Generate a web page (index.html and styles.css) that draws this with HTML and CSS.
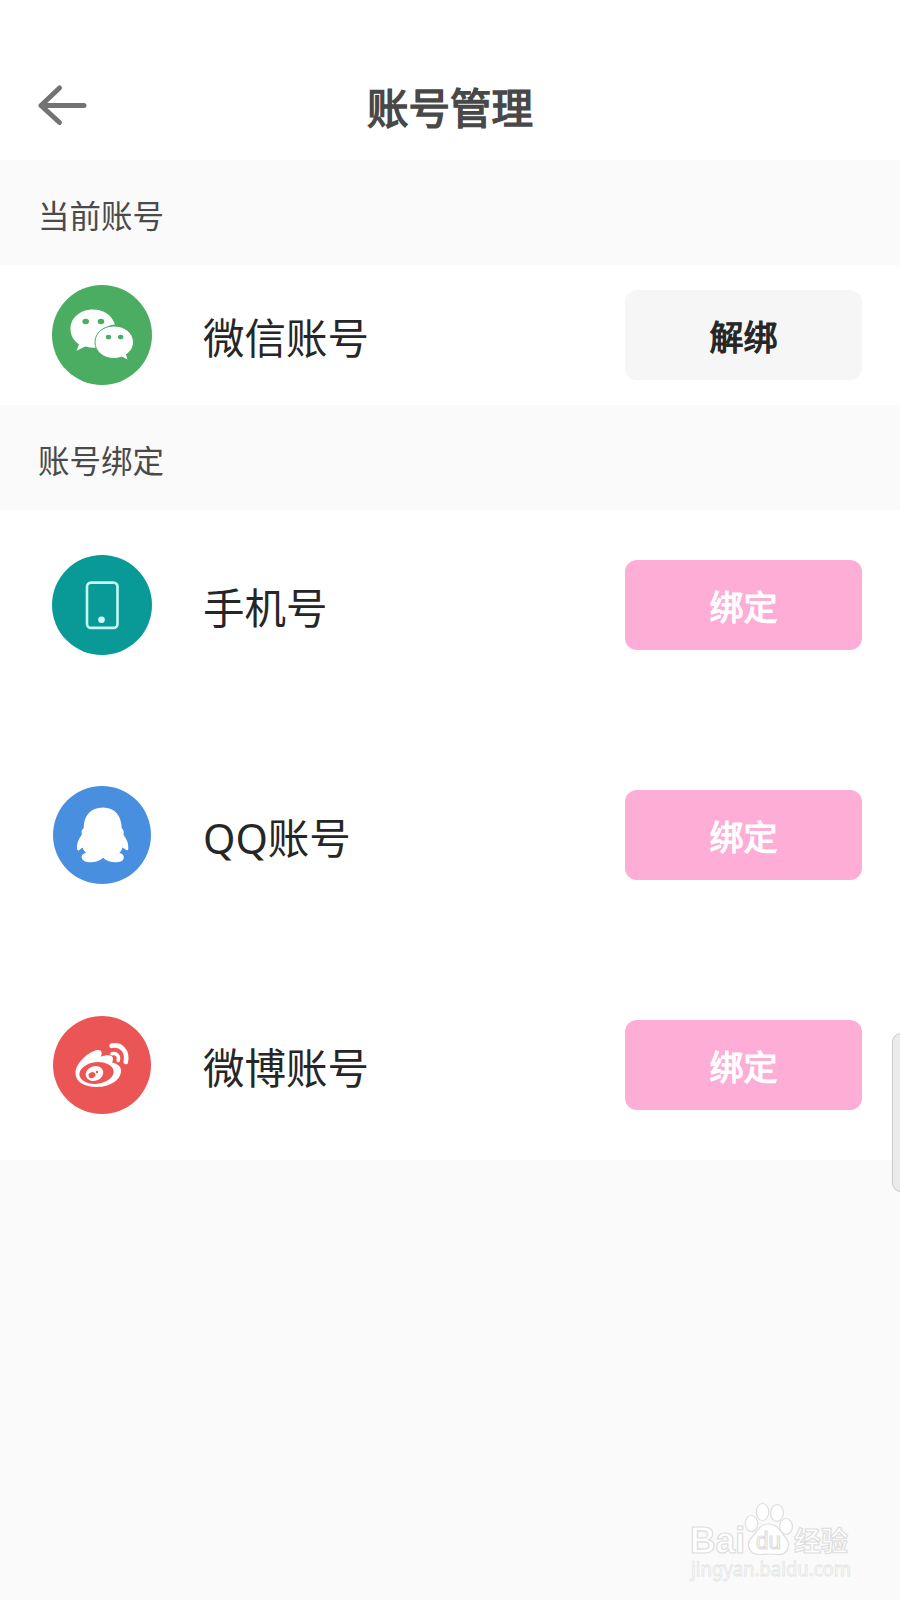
FILE: index.html
```html
<!DOCTYPE html>
<html lang="zh-CN">
<head>
<meta charset="utf-8">
<title>账号管理</title>
<link rel="stylesheet" href="styles.css">
</head>
<body>
<main class="screen">
  <header class="topbar">
    <svg class="back" width="52" height="44" viewBox="0 0 52 44"><path d="M23.500 5 5 22.500 23.500 39.500M5 22.500H48" /></svg>
    <h1 class="title">账号管理</h1>
  </header>

  <h2 class="caption">当前账号</h2>
  <section class="group current">
    <div class="row">
      <svg class="icon" viewBox="0 0 100 100">
        <circle cx="50" cy="50" r="50" fill="#4aad62"/>
        <path d="M41 24.500C28 24.500 18.500 33 18.500 44c0 6.800 3.500 12 8.500 15.500l-2.500 6.300 8.800-4.300c3.500 1 7 1.500 10.700 1.200C46 49 53 39.500 63 39.500 60 30 51.500 24.500 41 24.500z" fill="#fff"/>
        <path d="M62 41C51 41 43 48 43 57.200S51 73.500 62 73.500c3 0 5.600-.6 8-1.500l6.200 3.500-1.700-6c4.300-3 7-7.300 7-12.300C81.500 48 73 41 62 41z" fill="#fff" stroke="#4aad62" stroke-width="1"/>
        <g fill="#4aad62"><ellipse cx="33.700" cy="36.500" rx="3.300" ry="2.800"/><ellipse cx="49" cy="36.500" rx="3.300" ry="2.800"/><ellipse cx="56.500" cy="52" rx="2.700" ry="2.300"/><ellipse cx="68.700" cy="52" rx="2.700" ry="2.300"/></g>
      </svg>
      <span class="name">微信账号</span>
      <button class="action plain">解绑</button>
    </div>
  </section>

  <h2 class="caption">账号绑定</h2>
  <section class="group">
    <div class="row">
      <svg class="icon" viewBox="0 0 100 100">
        <circle cx="50" cy="50" r="50" fill="#099a98"/>
        <rect x="35" y="27.600" width="30.500" height="45.300" rx="4" fill="none" stroke="#c4f7f4" stroke-width="2.600"/>
        <circle cx="49.500" cy="64.800" r="3.300" fill="#d8fffd"/>
      </svg>
      <span class="name">手机号</span>
      <button class="action">绑定</button>
    </div>
    <div class="row">
      <svg class="icon" viewBox="0 0 100 100">
        <circle cx="50" cy="50" r="49" fill="#498fe0"/>
        <path d="M51 22.500C38.500 22.500 31.500 31 31.800 43c-1 1-2.300 2.400-2.300 4l.4 2.500C26.500 54 24.500 59 25 63.500c.3 2.300 1.700 2.500 3.200.7l2.300-1.700c.8 2.500 2 3.800 3.700 5.300-2.800 1-5 2.300-4.500 4.700 1 6.500 15.500 6.300 21.300.3 6 6 20.500 6.200 20.800-.3.2-2.600-1.800-3.800-4.500-4.700 1.500-1.500 2.800-3.100 3.300-5.300l2.500 1.700c1.800 1.800 3.100 1.400 3.200-.7.3-5-1.500-9.500-5-14 .6-1 .6-2.700 0-4.300l-1.600-2.200C69.500 31 63 22.500 51 22.500z" fill="#fff"/>
      </svg>
      <span class="name">QQ账号</span>
      <button class="action">绑定</button>
    </div>
    <div class="row">
      <svg class="icon" viewBox="0 0 100 100">
        <circle cx="50" cy="50" r="49" fill="#ec5555"/>
        <path d="M44 35.300c5-1.500 7 1.500 4.800 6.400 5.500-2.200 12-2.300 12.200 1.800.1 1.800-.6 3-.8 4 5.300 1.200 8.900 4 8.800 8.300C69 65 58 72 45 72S23.300 66.500 23.500 58C23.700 49 34 38.500 44 35.300z" fill="#fff"/>
        <ellipse cx="44.500" cy="58" rx="17.200" ry="10.800" transform="rotate(-7 44.500 58)" fill="#ec5555"/>
        <ellipse cx="42.500" cy="58.500" rx="9" ry="7.300" transform="rotate(-20 42.500 58.500)" fill="#fff"/>
        <ellipse cx="40" cy="60.200" rx="3.500" ry="2.900" transform="rotate(-25 40 60.200)" fill="#ec5555"/>
        <circle cx="45" cy="57" r="1.200" fill="#ec5555"/>
        <g fill="none" stroke="#fff" stroke-linecap="round"><path d="M59.500 30.800C69 28.500 76 36 73.800 47" stroke-width="4.600"/><path d="M60 38.800c4.800-1 7.500 2.200 6.200 6.700" stroke-width="3.500"/></g>
      </svg>
      <span class="name">微博账号</span>
      <button class="action">绑定</button>
    </div>
  </section>

  <div class="edge-handle"></div>

  <svg class="watermark" width="170" height="90" viewBox="0 0 170 90">
    <g class="mark">
      <text class="brand" x="5" y="57.500" textLength="55" lengthAdjust="spacingAndGlyphs">Bai</text>
      <ellipse cx="66.500" cy="28.500" rx="6.200" ry="8"/>
      <ellipse cx="77.500" cy="17" rx="6.200" ry="8.500"/>
      <ellipse cx="92" cy="18" rx="6.400" ry="8.300"/>
      <ellipse cx="101" cy="31.500" rx="6.400" ry="8"/>
      <path d="M83.500 29C74 29 73 36 67 42c-7 7-3 18 8 17.500 7-.5 10-1 17 0 10 1 15-9 8.500-17C95 36 93 29 83.500 29z"/>
      <text class="du" x="71" y="54" textLength="25" lengthAdjust="spacingAndGlyphs">du</text>
      <text class="cn" x="109" y="55.500" textLength="54" lengthAdjust="spacingAndGlyphs">经验</text>
    </g>
    <text class="site" x="6" y="80.500" textLength="160" lengthAdjust="spacingAndGlyphs">jingyan.baidu.com</text>
  </svg>
</main>
</body>
</html>
```
FILE: styles.css
```css
* { box-sizing: border-box; }
body {
  margin: 0;
  background: #fafafa;
  font-family: "Noto Sans", "Noto Sans CJK SC", sans-serif;
}
.screen {
  position: relative;
  width: 900px;
  height: 1600px;
  overflow: hidden;
  background: #fafafa;
}
.topbar {
  display: grid;
  grid-template-columns: 52px 1fr 52px;
  align-items: center;
  height: 160px;
  padding: 52px 36px 0;
  background: #fff;
}
.back {
  margin-top: -2px;
  fill: none;
  stroke: #737373;
  stroke-width: 5;
  stroke-linecap: round;
  stroke-linejoin: round;
}
.title {
  margin: 0;
  text-align: center;
  font: 400 41.5px/60px "Noto Sans CJK SC", sans-serif;
  -webkit-text-stroke: 1.5px #484848;
  color: #484848;
}
.caption {
  display: flex;
  align-items: center;
  height: 105px;
  margin: 0;
  padding: 2px 38px 0;
  font: 400 31.5px/46px "Noto Sans CJK SC", sans-serif;
  color: #4a4a4a;
}
.group {
  display: flex;
  flex-direction: column;
  gap: 40px;
  background: #fff;
}
.row {
  display: flex;
  align-items: center;
  height: 190px;
  padding: 0 38px 0 52px;
}
.current .row { height: 140px; }
.icon {
  flex: none;
  width: 100px;
  height: 100px;
}
.name {
  flex: 1;
  padding: 5px 0 0 51px;
  font-size: 41.5px;
  line-height: 60px;
  color: #262626;
}
.action {
  width: 237px;
  height: 90px;
  padding: 2px 0 0;
  border: 0;
  border-radius: 12px;
  background: #fdadd6;
  color: #fff;
  font: 400 34px/50px "Noto Sans CJK SC", sans-serif;
  -webkit-text-stroke: 1.2px currentColor;
}
.plain {
  background: #f6f6f6;
  color: #262626;
}
.edge-handle {
  position: absolute;
  top: 1033px;
  right: -2px;
  width: 10px;
  height: 159px;
  border: 1.5px solid #cacaca;
  border-radius: 9px 0 0 9px;
  background: #ebebeb;
}
.watermark {
  position: absolute;
  top: 1495px;
  left: 685px;
}
.mark {
  fill: #fff;
  stroke: #dedede;
  stroke-width: 1.2;
}
.brand { font: 700 36px "Liberation Sans", sans-serif; }
.du { font: 400 23px "Liberation Sans", sans-serif; }
.cn { font: 700 27px "Noto Sans CJK SC", sans-serif; }
.site {
  font: 400 19px "Noto Sans", sans-serif;
  fill: #fff;
  stroke: #e4e4e4;
  stroke-width: 0.8;
}
```
